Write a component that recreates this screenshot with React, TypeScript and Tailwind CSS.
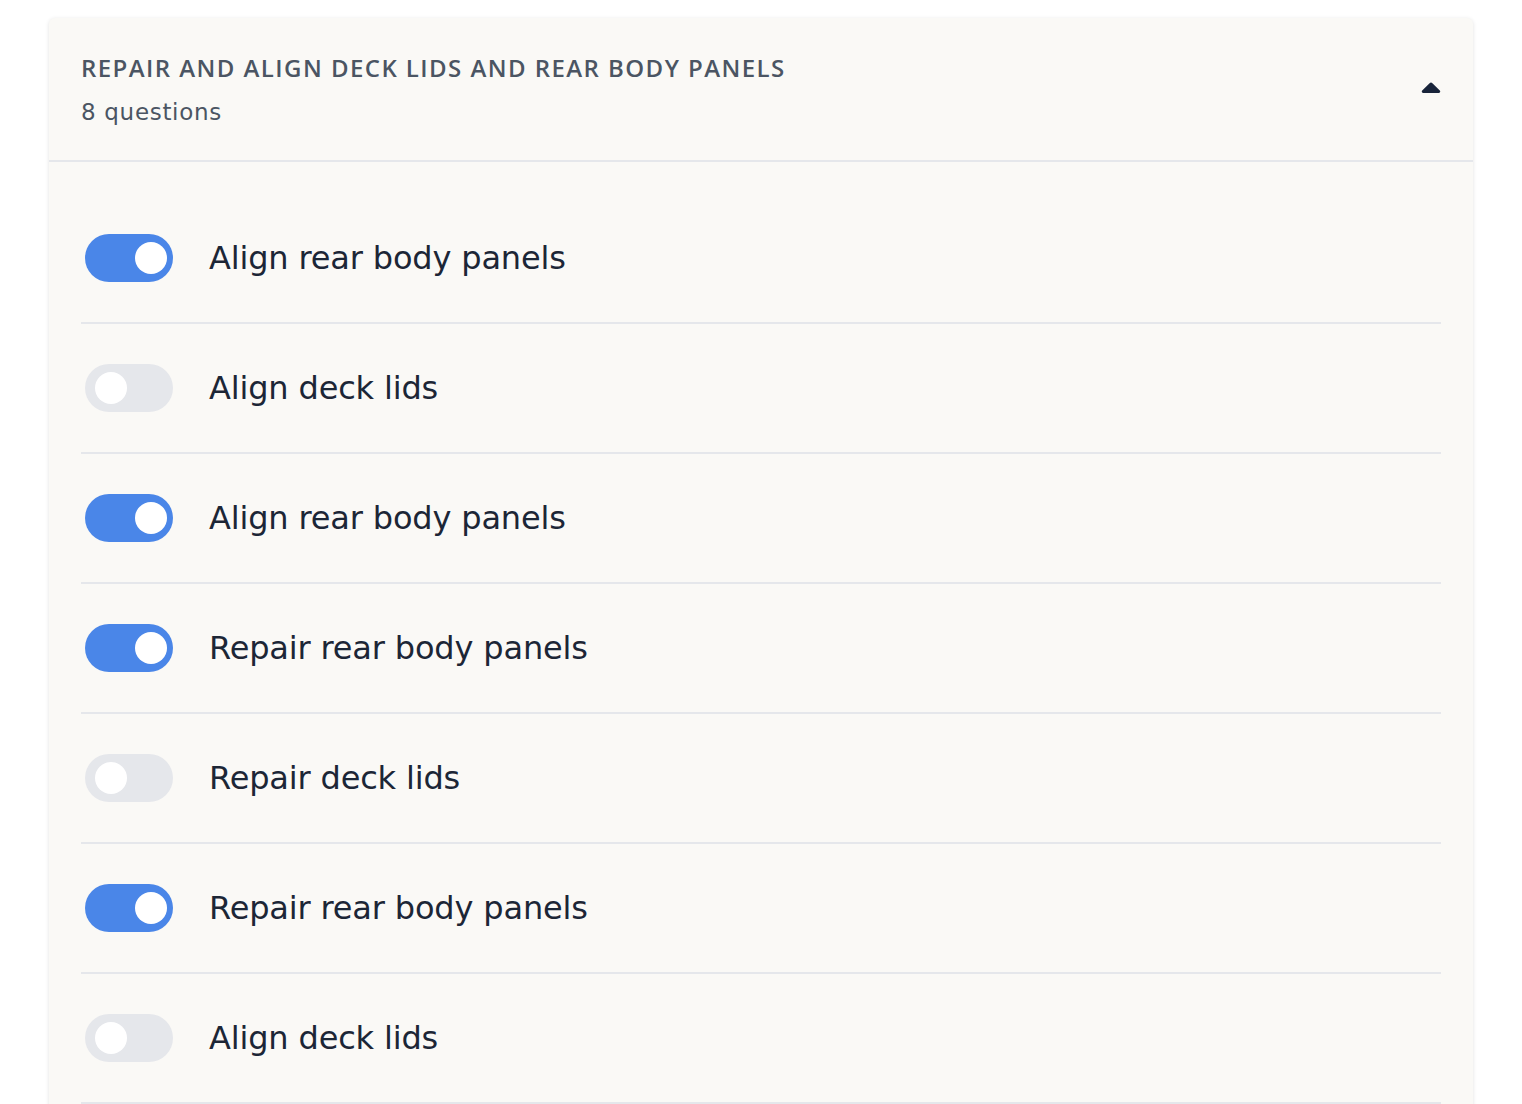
import { useState } from "react";

const QUESTIONS = [
  { label: "Align rear body panels", on: true },
  { label: "Align deck lids", on: false },
  { label: "Align rear body panels", on: true },
  { label: "Repair rear body panels", on: true },
  { label: "Repair deck lids", on: false },
  { label: "Repair rear body panels", on: true },
  { label: "Align deck lids", on: false },
  { label: "Repair deck lids", on: false },
];

function Toggle({ on, onClick }: { on: boolean; onClick: () => void }) {
  return (
    <button
      type="button"
      onClick={onClick}
      className={`flex h-12 w-[88px] shrink-0 items-center rounded-full ${
        on ? "justify-end bg-[#4a86e8] pr-1.5" : "justify-start bg-[#e5e7eb] pl-2.5"
      }`}
    >
      <span className="block h-8 w-8 rounded-full bg-white" />
    </button>
  );
}

export default function App() {
  const [items, setItems] = useState(QUESTIONS);
  const [open, setOpen] = useState(true);

  return (
    <div className="min-h-screen bg-white px-[49px] pt-[18px] font-['DejaVu_Sans',sans-serif]">
      <div className="rounded-md bg-[#faf9f6] shadow-[0_1px_4px_rgba(0,0,0,0.12)]">
        <button
          type="button"
          onClick={() => setOpen(!open)}
          className="flex w-full items-center justify-between border-b-2 border-[#e5e7eb] px-8 pt-9 pb-[34px] text-left"
        >
          <div>
            <h2 className="font-['Open_Sans',sans-serif] text-[24px] font-semibold uppercase leading-7 tracking-[0.06em] text-[#4b5563]">
              Repair and align deck lids and rear body panels
            </h2>
            <p className="mt-4 text-[23px] leading-7 tracking-[0.03em] text-[#4b5563]">
              {items.length} questions
            </p>
          </div>
          <svg width="20" height="12" viewBox="0 0 20 12" className="-mt-1 text-[#18243a]">
            <path
              d="M8.6 1.2a2 2 0 0 1 2.8 0l7.4 7.4c.9.9.3 2.4-1 2.4H2.2c-1.3 0-1.9-1.5-1-2.4z"
              fill="currentColor"
            />
          </svg>
        </button>

        {open && (
          <div className="px-8 pt-8">
            {items.map((q, i) => (
              <div
                key={i}
                className="flex h-[130px] items-center gap-9 border-b-2 border-[#e5e7eb] pl-1"
              >
                <Toggle
                  on={q.on}
                  onClick={() =>
                    setItems(items.map((it, j) => (j === i ? { ...it, on: !it.on } : it)))
                  }
                />
                <span className="text-[32px] tracking-[-0.005em] text-[#1c2636]">{q.label}</span>
              </div>
            ))}
          </div>
        )}
      </div>
    </div>
  );
}
